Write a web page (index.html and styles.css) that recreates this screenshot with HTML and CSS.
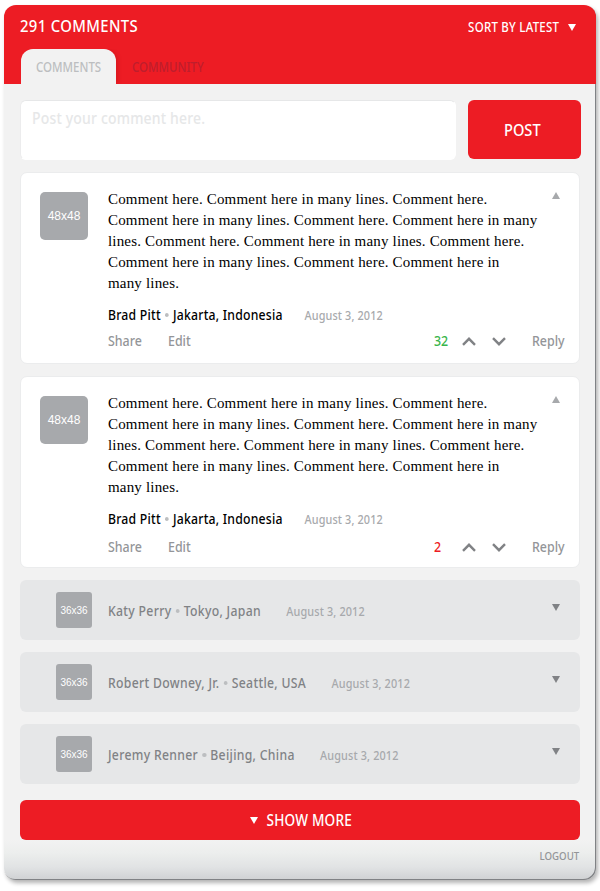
FILE: index.html
```html
<!DOCTYPE html>
<html lang="en">
<head>
<meta charset="utf-8">
<title>Comments</title>
<link rel="stylesheet" href="styles.css">
</head>
<body>
<main class="panel">
  <header class="header">
    <div class="topbar">
      <h1 class="title">291 COMMENTS</h1>
      <div class="sort"><span class="sort-label">SORT BY LATEST</span><svg class="tri" width="8" height="7" viewBox="0 0 8 7"><path d="M0 0h8L4 7z" fill="#fff"/></svg></div>
    </div>
    <nav class="tabs">
      <div class="tab active"><span>COMMENTS</span></div>
      <div class="tab"><span>COMMUNITY</span></div>
    </nav>
  </header>

  <section class="composer">
    <div class="input"><span>Post your comment here.</span></div>
    <div class="post"><span>POST</span></div>
  </section>

  <article class="card">
    <div class="avatar">48x48</div>
    <div class="body">
      <p class="text">Comment here. Comment here in many lines. Comment here.<br>Comment here in many lines. Comment here. Comment here in many<br>lines. Comment here. Comment here in many lines. Comment here.<br>Comment here in many lines. Comment here. Comment here in<br>many lines.</p>
      <div class="meta"><span>Brad Pitt</span><i class="dot"></i><span>Jakarta, Indonesia</span><time class="date">August 3, 2012</time></div>
      <div class="actions">
        <span class="share">Share</span><span class="edit">Edit</span>
        <span class="score up">32</span>
        <svg class="chev" width="14" height="9" viewBox="0 0 14 9"><path d="M1 7.8L7 1.8l6 6" fill="none" stroke="#808285" stroke-width="2.4"/></svg>
        <svg class="chev" width="14" height="9" viewBox="0 0 14 9"><path d="M1 1.2l6 6 6-6" fill="none" stroke="#808285" stroke-width="2.4"/></svg>
        <span class="reply">Reply</span>
      </div>
    </div>
    <svg class="toggle" width="8" height="7" viewBox="0 0 8 7"><path d="M0 7h8L4 0z" fill="#a7a9ac"/></svg>
  </article>

  <article class="card second">
    <div class="avatar">48x48</div>
    <div class="body">
      <p class="text">Comment here. Comment here in many lines. Comment here.<br>Comment here in many lines. Comment here. Comment here in many<br>lines. Comment here. Comment here in many lines. Comment here.<br>Comment here in many lines. Comment here. Comment here in<br>many lines.</p>
      <div class="meta"><span>Brad Pitt</span><i class="dot"></i><span>Jakarta, Indonesia</span><time class="date">August 3, 2012</time></div>
      <div class="actions">
        <span class="share">Share</span><span class="edit">Edit</span>
        <span class="score down">2</span>
        <svg class="chev" width="14" height="9" viewBox="0 0 14 9"><path d="M1 7.8L7 1.8l6 6" fill="none" stroke="#808285" stroke-width="2.4"/></svg>
        <svg class="chev" width="14" height="9" viewBox="0 0 14 9"><path d="M1 1.2l6 6 6-6" fill="none" stroke="#808285" stroke-width="2.4"/></svg>
        <span class="reply">Reply</span>
      </div>
    </div>
    <svg class="toggle" width="8" height="7" viewBox="0 0 8 7"><path d="M0 7h8L4 0z" fill="#a7a9ac"/></svg>
  </article>

  <article class="row">
    <div class="thumb">36x36</div>
    <div class="meta"><span>Katy Perry</span><i class="dot"></i><span>Tokyo, Japan</span><time class="date">August 3, 2012</time></div>
    <svg class="toggle" width="8" height="7" viewBox="0 0 8 7"><path d="M0 0h8L4 7z" fill="#808285"/></svg>
  </article>
  <article class="row">
    <div class="thumb">36x36</div>
    <div class="meta"><span>Robert Downey, Jr.</span><i class="dot"></i><span>Seattle, USA</span><time class="date">August 3, 2012</time></div>
    <svg class="toggle" width="8" height="7" viewBox="0 0 8 7"><path d="M0 0h8L4 7z" fill="#808285"/></svg>
  </article>
  <article class="row">
    <div class="thumb">36x36</div>
    <div class="meta"><span>Jeremy Renner</span><i class="dot"></i><span>Beijing, China</span><time class="date">August 3, 2012</time></div>
    <svg class="toggle" width="8" height="7" viewBox="0 0 8 7"><path d="M0 0h8L4 7z" fill="#808285"/></svg>
  </article>

  <div class="more"><svg class="tri" width="8" height="7" viewBox="0 0 8 7"><path d="M0 0h8L4 7z" fill="#fff"/></svg><span>SHOW MORE</span></div>
  <footer class="footer"><span>LOGOUT</span></footer>
</main>
</body>
</html>
```
FILE: styles.css
```css
* { box-sizing: border-box; }
body {
  min-height: 891px;
  margin: 0;
  padding: 5px 0 0 4px;
  background: #fff;
  font-family: "Noto Sans", "Open Sans", sans-serif;
  font-weight: 500;
  white-space: nowrap;
}
svg { display: block; flex: none; }
.panel {
  width: 592px;
  height: 875px;
  border-radius: 12px;
  background: linear-gradient(#f2f2f2 835px, #eceeed 848px, #e1e3e4 862px, #cfd1d3 875px);
  box-shadow: inset -1px -1px 0 #808285, 2px 3px 4px rgba(0, 0, 0, .3);
}
.header {
  height: 79px;
  padding: 0 19px 0 16px;
  border-radius: 12px 12px 0 0;
  background: #ed1c24;
  color: #fff;
}
.topbar {
  display: flex;
  justify-content: space-between;
  align-items: center;
  height: 42px;
}
.title {
  margin: 0;
  padding-bottom: 1px;
  font-size: 16.5px;
  font-weight: 500;
  letter-spacing: .4px;
  transform: scaleX(.9);
  transform-origin: left;
}
.sort {
  display: flex;
  align-items: center;
  gap: 9px;
  padding: 2px 1px 0 0;
  font-size: 13.5px;
}
.sort-label { letter-spacing: .3px; transform: scaleX(.85); transform-origin: right; }
/* condensed labels */
.tab span, .input span, .post span, .more span, .footer span {
  display: inline-block;
  transform: scaleX(.86);
}
.tabs { display: flex; gap: 1px; padding: 2px 0 0 1px; }
.tab {
  width: 95px;
  height: 35px;
  padding: 0 15px;
  border-radius: 12px 12px 0 0;
  line-height: 36px;
  font-size: 13.5px;
  color: #be1e2d;
}
.tab span { transform: scaleX(.85); transform-origin: left; }
.active {
  background: #f2f2f2;
  color: #bcbec0;
  box-shadow: 3px 0 4px -1px rgba(130, 0, 0, .18);
  clip-path: inset(0 -8px 0 0);
}
.composer { display: flex; gap: 12px; padding: 16px 15px 12px 16px; }
.input {
  width: 436px;
  height: 60px;
  padding: 7px 11px;
  border: 1px solid #fff;
  border-top-color: #e6e7e8;
  border-left-color: #ececed;
  border-radius: 6px;
  background: #fff;
  color: #e6e7e8;
  font-size: 16px;
  line-height: 20px;
}
.input span { letter-spacing: .2px; transform: scaleX(.875); transform-origin: left; }
.post {
  width: 113px;
  height: 59px;
  padding-right: 4px;
  border-radius: 6px;
  background: #ed1c24;
  color: #fff;
  font-size: 17px;
  line-height: 60px;
  text-align: center;
}
.card {
  display: flex;
  width: 560px;
  height: 192px;
  margin: 0 0 12px 16px;
  padding: 16px 19px 0;
  border: 1px solid #ebeced;
  border-radius: 7px;
  background: #fff;
}
.avatar, .thumb {
  flex: none;
  background: #a7a9ac;
  color: #fff;
  font-family: "Liberation Sans", sans-serif;
  font-weight: 400;
  text-align: center;
}
.avatar {
  width: 48px;
  height: 48px;
  margin: 3px 20px 0 0;
  border-radius: 5px;
  font-size: 12px;
  line-height: 48px;
}
.body { width: 444px; }
.text {
  margin: 0;
  font: 400 15px/21px "Liberation Serif", serif;
  letter-spacing: .18px;
  color: #000;
}
.meta {
  display: flex;
  align-items: center;
  height: 22px;
  font-size: 13.5px;
  letter-spacing: .25px;
  color: #000;
  transform: scaleX(.905);
  transform-origin: left;
}
.body .meta { margin-top: 10px; }
.dot {
  width: 4.5px;
  height: 4px;
  margin: 0 4.5px;
  border-radius: 50%;
  background: #bcbec0;
}
.date {
  margin: 1px 0 0 24px;
  font-size: 12px;
  letter-spacing: .15px;
  color: #a7a9ac;
}
.actions {
  display: flex;
  align-items: center;
  height: 22px;
  margin-top: 4px;
  font-size: 13.5px;
  color: #939598;
}
.actions span { transform: scaleX(.92); transform-origin: left; }
.second .actions { margin-top: 6px; }
.share { width: 60px; }
.score { width: 28px; margin-left: auto; }
.up { color: #39b54a; }
.down { color: #ed1c24; }
.chev { margin-right: 16px; }
.reply { width: 34px; margin: 0 -14px 0 10px; }
.toggle { margin-top: 3px; }
.row {
  display: flex;
  width: 560px;
  height: 60px;
  margin: 0 0 12px 16px;
  padding: 12px 20px 0 36px;
  border-radius: 6px;
  background: #e6e7e8;
}
.thumb {
  width: 36px;
  height: 36px;
  margin-right: 16px;
  border-radius: 3px;
  font-size: 10px;
  line-height: 37px;
}
.row .meta { flex: 1; margin-top: 8px; letter-spacing: .35px; color: #808285; }
.row .date { margin-left: 28px; letter-spacing: .15px; }
.row .toggle { margin-top: 12px; }
.more {
  display: flex;
  justify-content: center;
  align-items: center;
  gap: 1px;
  width: 560px;
  height: 40px;
  margin: 16px 0 0 16px;
  padding-left: 10px;
  border-radius: 6px;
  background: #ed1c24;
  color: #fff;
  font-size: 16px;
}
.more span { letter-spacing: .2px; transform: scaleX(.85); }
.footer {
  padding: 8px 17px 0 0;
  text-align: right;
  font-size: 11.5px;
  line-height: 16px;
  color: #939598;
}
.footer span { transform: scaleX(.84); transform-origin: right; }
```
